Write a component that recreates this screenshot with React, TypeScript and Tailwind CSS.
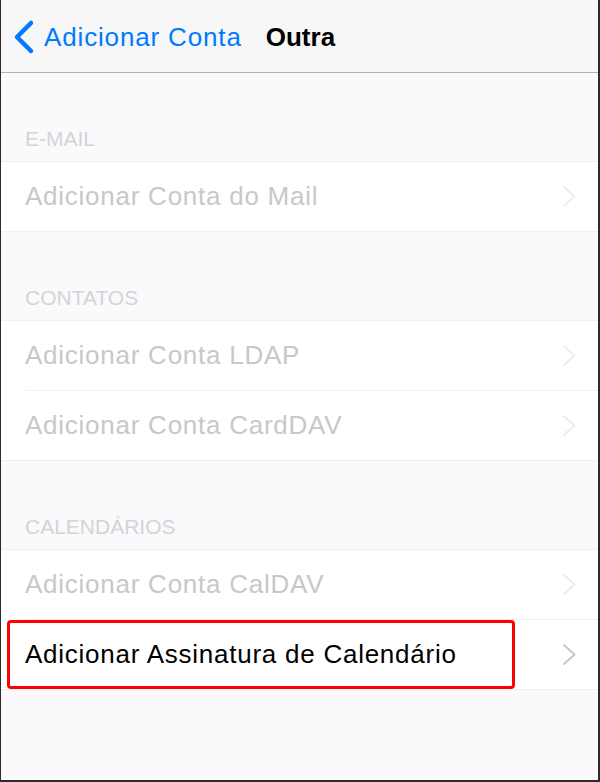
import React from "react";

const font = { fontFamily: '"Liberation Sans", Arial, sans-serif' };

function Chevron({ color }: { color: string }) {
  return (
    <svg width="15" height="23" viewBox="0 0 15 23" className="shrink-0">
      <polyline points="2,2 12.5,11.5 2,21" fill="none" stroke={color} strokeWidth="2" strokeLinecap="round" strokeLinejoin="round" />
    </svg>
  );
}

function Row({ label, active, last, first, highlight }: { label: string; active?: boolean; last?: boolean; first?: boolean; highlight?: boolean }) {
  return (
    <div className={`relative bg-white ${first ? "border-t border-[#f0f0f2]" : ""}`}>
      <div className="h-[69px] flex items-center pl-[24px] pr-[21px]">
        <span className={`flex-1 text-[26px] tracking-[0.75px] ${active ? "text-black" : "text-[#c8c8c8]"}`}>{label}</span>
        <Chevron color={active ? "#c7c7cc" : "#ededed"} />
      </div>
      <div className={`h-px bg-[#f0f0f2] ${last ? "" : "ml-[25px]"}`} />
      {highlight && (
        <div className="absolute left-[6px] top-0 w-[508px] h-[69px] border-[3px] border-[#ff0000] rounded-[4px]" />
      )}
    </div>
  );
}

function Header({ title }: { title: string }) {
  return (
    <div className="h-[88px] flex items-end pl-[24px] pb-[12px]">
      <span className="text-[21px] leading-none text-[#d4d4d7] uppercase">{title}</span>
    </div>
  );
}

export default function App() {
  return (
    <div style={font} className="w-[600px] h-[782px] box-border border-l border-r-2 border-b-2 border-[#2b2b2b] bg-[#fafafc] overflow-hidden">
      <div className="h-[73px] bg-[#f7f7f7] border-b border-[#b2b2b2] flex items-center">
        <svg width="24" height="36" viewBox="0 0 24 36" className="ml-[11px] mt-[1px]">
          <polyline points="19,4 5,18 19,32" fill="none" stroke="#007aff" strokeWidth="4.5" strokeLinecap="round" strokeLinejoin="round" />
        </svg>
        <span className="ml-[8px] mt-[2px] text-[26px] tracking-[0.85px] text-[#007aff]">Adicionar Conta</span>
        <span className="ml-[24px] mt-[2px] text-[26px] font-bold text-black">Outra</span>
      </div>
      <Header title="E-mail" />
      <Row label="Adicionar Conta do Mail" first last />
      <Header title="Contatos" />
      <Row label="Adicionar Conta LDAP" first />
      <Row label="Adicionar Conta CardDAV" last />
      <Header title="Calendários" />
      <Row label="Adicionar Conta CalDAV" first />
      <Row label="Adicionar Assinatura de Calendário" active last highlight />
    </div>
  );
}
